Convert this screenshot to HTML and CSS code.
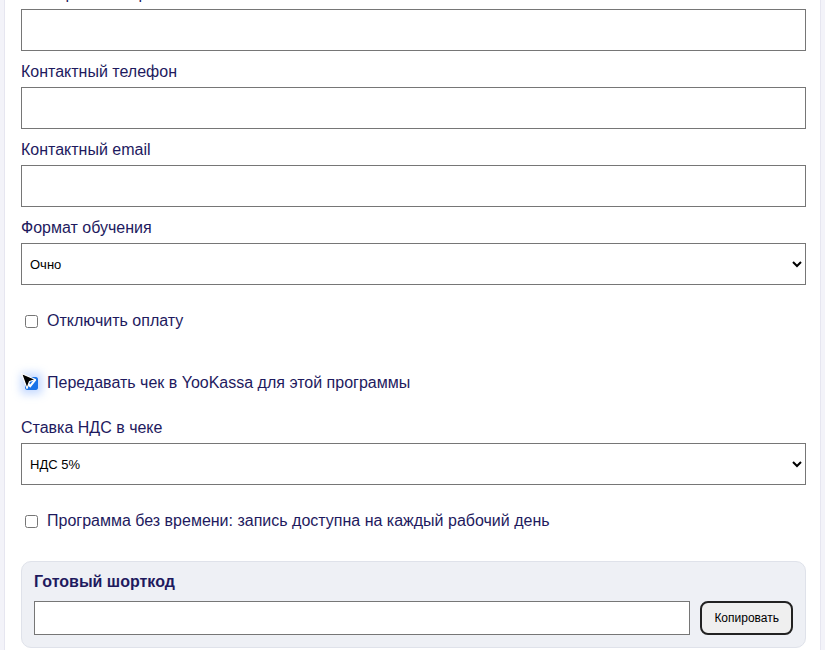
FILE: index.html
```html
<!DOCTYPE html>
<html lang="ru">
<head>
<meta charset="UTF-8">
<meta name="viewport" content="width=device-width, initial-scale=1.0">
<title>Программа — настройки</title>
<link rel="stylesheet" href="styles.css">
</head>
<body>

<div class="container">
  <form id="programForm">
    <label for="organizer">Имя организатора</label>
    <input type="text" id="organizer" name="organizer">

    <label for="phone">Контактный телефон</label>
    <input type="text" id="phone" name="phone">

    <label for="email">Контактный email</label>
    <input type="text" id="email" name="email">

    <label for="format">Формат обучения</label>
    <select id="format" name="format">
      <option value="offline">Очно</option>
      <option value="online">Онлайн</option>
    </select>

    <div class="check-row">
      <input type="checkbox" id="no_payment" name="no_payment">
      <label for="no_payment">Отключить оплату</label>
    </div>

    <div class="check-row check-row--spaced">
      <span class="check-wrap">
        <input type="checkbox" id="receipt" name="receipt" checked>
        <svg class="cursor" width="17" height="19" viewBox="0 0 17 19">
          <path d="M1.5 1.5 L15.5 7.5 L9.5 9.5 L7 16.5 Z" fill="#000" stroke="#fff" stroke-width="1.2" stroke-linejoin="round"/>
        </svg>
      </span>
      <label for="receipt">Передавать чек в YooKassa для этой программы</label>
    </div>

    <label for="vat">Ставка НДС в чеке</label>
    <select id="vat" name="vat">
      <option value="none">Без НДС</option>
      <option value="5" selected>НДС 5%</option>
      <option value="20">НДС 20%</option>
    </select>

    <div class="check-row">
      <input type="checkbox" id="no_time" name="no_time">
      <label for="no_time">Программа без времени: запись доступна на каждый рабочий день</label>
    </div>
  </form>

  <div class="shortcode">
    <h3>Готовый шорткод</h3>
    <div class="shortcode-line">
      <input type="text" id="shortcode" readonly>
      <button type="button" id="copyBtn">Копировать</button>
    </div>
  </div>
</div>

</body>
</html>
```

FILE: styles.css
```css
body {
  margin: 0;
  font-family: "Liberation Sans", Arial, sans-serif;
  background-color: #f3f3f9;
  color: #1e1a5e;
  overflow: hidden;
}

.container {
  margin: -18px 4px 0 4px;
  padding: 0 14px 20px 16px;
  background-color: #fff;
  border-left: 1px solid #e6e6f0;
  border-right: 1px solid #e6e6f0;
}

label {
  display: block;
  font-size: 16px;
  line-height: 20px;
  padding-top: 2px;
  margin-bottom: 5px;
}

input[type="text"],
select {
  display: block;
  box-sizing: border-box;
  width: 100%;
  height: 42px;
  margin: 0 0 9px 0;
  padding: 0 4px;
  border: 1px solid #767676;
  border-radius: 0;
  background-color: #fff;
  font-family: "Liberation Sans", Arial, sans-serif;
  font-size: 13px;
  color: #000;
}

.check-row {
  display: flex;
  align-items: center;
  height: 20px;
  margin: 26px 0 26px 4px;
}

.check-row label {
  margin: 0;
  padding: 0;
}

.check-row input[type="checkbox"] {
  width: 13px;
  height: 13px;
  margin: 0 9px 0 0;
  accent-color: #1a73e8;
}

.check-row--spaced {
  margin-top: 42px;
  margin-bottom: 23px;
}

.check-wrap {
  position: relative;
  display: flex;
  margin-right: 9px;
}

.check-wrap input[type="checkbox"] {
  margin: 0;
  border-radius: 2px;
  box-shadow: 0 0 9px 4px rgba(110, 160, 255, 0.4);
}

.cursor {
  position: absolute;
  left: -5px;
  top: -5px;
}

.shortcode {
  margin-top: 30px;
  padding: 10px 12px 12px 12px;
  background-color: #eef0f5;
  border: 1px solid #dfe2ea;
  border-radius: 10px;
}

.shortcode h3 {
  margin: 0 0 9px 0;
  font-size: 16px;
  line-height: 20px;
}

.shortcode-line {
  display: flex;
  align-items: center;
  gap: 10px;
}

.shortcode-line input[type="text"] {
  flex: 1;
  height: 34px;
  margin: 0;
}

button {
  height: 34px;
  padding: 0 12px;
  border: 2px solid #222;
  border-radius: 8px;
  background-color: #efefef;
  font-family: "Liberation Sans", Arial, sans-serif;
  font-size: 12px;
  color: #000;
  cursor: pointer;
}

button:hover {
  background-color: #e4e4e4;
}
```
